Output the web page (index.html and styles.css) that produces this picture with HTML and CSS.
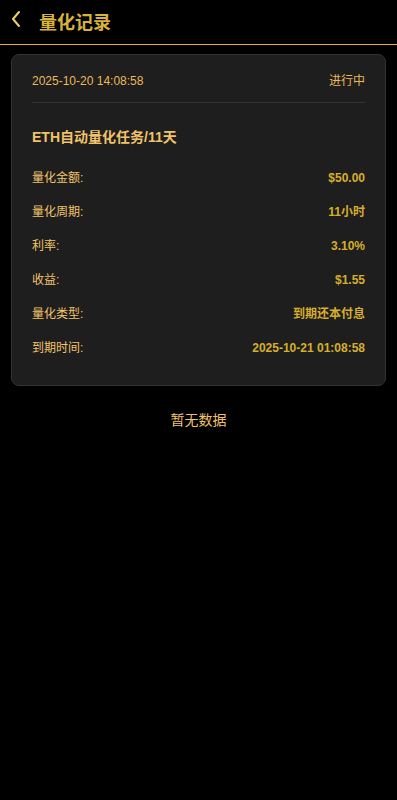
FILE: index.html
```html
<!DOCTYPE html>
<html lang="zh-CN">
<head>
    <meta charset="UTF-8">
    <meta name="viewport" content="width=device-width, initial-scale=1.0">
    <title>量化记录</title>
    <link rel="stylesheet" href="styles.css">
</head>
<body>

<div class="header">
    <div class="back">
        <svg width="12" height="18" viewBox="0 0 12 18"><path d="M9 2 L3 9 L9 16" fill="none" stroke="#f0d060" stroke-width="2" stroke-linecap="round" stroke-linejoin="round"/></svg>
    </div>
    <div class="title">量化记录</div>
</div>

<div class="list">
    <div class="card">
        <div class="card-top">
            <span>2025-10-20 14:08:58</span>
            <span>进行中</span>
        </div>
        <div class="card-name">ETH自动量化任务/11天</div>
        <div class="row"><span class="label">量化金额:</span><span class="value">$50.00</span></div>
        <div class="row"><span class="label">量化周期:</span><span class="value">11小时</span></div>
        <div class="row"><span class="label">利率:</span><span class="value">3.10%</span></div>
        <div class="row"><span class="label">收益:</span><span class="value">$1.55</span></div>
        <div class="row"><span class="label">量化类型:</span><span class="value">到期还本付息</span></div>
        <div class="row"><span class="label">到期时间:</span><span class="value">2025-10-21 01:08:58</span></div>
    </div>
    <div class="empty">暂无数据</div>
</div>

</body>
</html>
```

FILE: styles.css
```css
body {
    font-family: 'Liberation Sans', 'Noto Sans CJK SC', sans-serif;
    margin: 0;
    padding: 0;
    background-color: #000;
    color: #f2c46a;
}
.header {
    height: 44px;
    display: flex;
    align-items: center;
    border-bottom: 1px solid #e6b422;
    padding-left: 10px;
}
.back {
    display: flex;
    width: 29px;
    margin-top: -6px;
}
.title {
    font-size: 18px;
    font-weight: bold;
    color: #d9b23a;
    margin-top: -3px;
}
.list {
    padding: 9px 11px;
}
.card {
    background-color: #1e1e1e;
    border: 1px solid #333;
    border-radius: 8px;
    padding: 0 20px 19px;
}
.card-top {
    display: flex;
    justify-content: space-between;
    line-height: 14px;
    padding: 19px 0 14px;
    border-bottom: 1px solid #333;
    font-size: 12px;
    color: #e9b95a;
}
.card-name {
    font-size: 14px;
    font-weight: bold;
    line-height: 16px;
    color: #f0c36a;
    padding: 26px 0 17px;
}
.row {
    display: flex;
    justify-content: space-between;
    align-items: baseline;
    line-height: 16px;
    padding: 8px 0 10px;
    font-size: 12px;
}
.label {
    color: #f2c46a;
}
.value {
    font-weight: bold;
    color: #d6ae2c;
}
.empty {
    text-align: center;
    font-size: 14px;
    line-height: 16px;
    color: #f2c46a;
    padding-top: 26px;
}
```
